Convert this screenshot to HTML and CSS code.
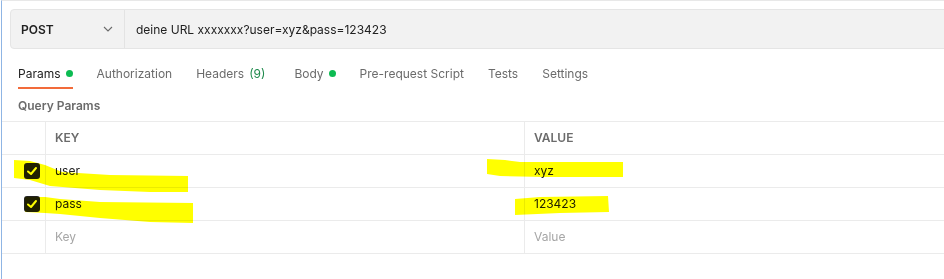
FILE: index.html
```html
<!DOCTYPE html>
<html lang="en">
<head>
<meta charset="UTF-8">
<title>Request - Params</title>
<link rel="stylesheet" href="styles.css">
</head>
<body>
<div class="frame">
    <div class="url-bar">
        <div class="method">
            <span class="method-name">POST</span>
            <svg class="chevron" width="10" height="6" viewBox="0 0 10 6"><polyline points="1,1 5,5 9,1" fill="none" stroke="#6b6b6b" stroke-width="1.1"/></svg>
        </div>
        <div class="url">deine URL xxxxxxx?user=xyz&amp;pass=123423</div>
    </div>

    <div class="tabs">
        <div class="tab active">Params <span class="dot"></span></div>
        <div class="tab">Authorization</div>
        <div class="tab">Headers <span class="count">(9)</span></div>
        <div class="tab">Body <span class="dot"></span></div>
        <div class="tab">Pre-request Script</div>
        <div class="tab">Tests</div>
        <div class="tab">Settings</div>
    </div>

    <div class="section-title">Query Params</div>

    <div class="params">
        <div class="row head">
            <div class="cell check"></div>
            <div class="cell key">KEY</div>
            <div class="cell value">VALUE</div>
        </div>
        <div class="row">
            <div class="cell check"><span class="box"><svg width="16" height="16" viewBox="0 0 16 16"><polyline points="4,8.5 7,11 12,5" fill="none" stroke="#fff" stroke-width="2" stroke-linecap="round" stroke-linejoin="round"/></svg></span></div>
            <div class="cell key">user</div>
            <div class="cell value">xyz</div>
        </div>
        <div class="row">
            <div class="cell check"><span class="box"><svg width="16" height="16" viewBox="0 0 16 16"><polyline points="4,8.5 7,11 12,5" fill="none" stroke="#fff" stroke-width="2" stroke-linecap="round" stroke-linejoin="round"/></svg></span></div>
            <div class="cell key">pass</div>
            <div class="cell value">123423</div>
        </div>
        <div class="row">
            <div class="cell check"></div>
            <div class="cell key placeholder">Key</div>
            <div class="cell value placeholder">Value</div>
        </div>
    </div>
</div>

<!-- marker strokes drawn over the screenshot -->
<svg class="marker" width="944" height="279" viewBox="0 0 944 279">
    <polygon points="14,160 30,161 45,165 62,172 110,175 188,176 188,192 150,192 100,190 50,186 30,180 14,178"/>
    <polygon points="25,197 45,197 60,199 100,202 193,203 193,223 150,222 100,218 60,214 45,213 25,212"/>
    <polygon points="487,159 505,160 520,162 623,162 623,177 545,177 500,176 487,174"/>
    <polygon points="515,199 540,197 608,196 609,212 560,213 515,215"/>
</svg>
</body>
</html>
```

FILE: styles.css
```css
body {
    margin: 0;
    padding: 0 0 0 1px;
    font-family: Inter, "Noto Sans", sans-serif;
    background-color: #fff;
    color: #212121;
    overflow: hidden;
}

.frame {
    height: 278px;
    border-top: 1px solid #e8e8e8;
    border-left: 1px solid #8fb5e4;
    overflow: hidden;
}

.url-bar {
    display: flex;
    height: 38px;
    margin: 8px -20px 0 8px;
    background-color: #f2f2f2;
    border: 1px solid #e5e5e5;
    border-radius: 4px;
}

.method {
    width: 114px;
    display: flex;
    align-items: center;
    justify-content: space-between;
    padding: 0 11px 0 10px;
    box-sizing: border-box;
    border-right: 1px solid #e3e3e3;
}

.method-name {
    font-size: 12px;
    font-weight: 600;
    color: #212121;
}

.url {
    display: flex;
    align-items: center;
    padding-left: 11px;
    font-size: 12px;
    color: #212121;
}

.tabs {
    display: flex;
    margin: 14px 0 0 16px;
}

.tab {
    display: flex;
    align-items: center;
    height: 20px;
    padding-bottom: 4px;
    margin-right: 24px;
    border-bottom: 2px solid transparent;
    font-size: 12px;
    color: #6b6b6b;
}

.tab.active {
    color: #212121;
    border-bottom-color: #f26b3a;
}

.dot {
    display: inline-block;
    width: 7px;
    height: 7px;
    margin-left: 5px;
    border-radius: 50%;
    background-color: #0cbb52;
}

.count {
    margin: 0 5px 0 5px;
    color: #1f8a4c;
}

.section-title {
    margin: 9px 0 7px 16px;
    line-height: 16px;
    font-size: 12px;
    font-weight: 600;
    color: #6b6b6b;
}

.params {
    margin-right: -20px;
}

.row {
    display: grid;
    grid-template-columns: 44px 479px 1fr;
    height: 32px;
    border-top: 1px solid #ebebeb;
}

.row:last-child {
    border-bottom: 1px solid #ebebeb;
}

.cell {
    display: flex;
    align-items: center;
    padding-bottom: 1px;
    box-sizing: border-box;
    font-size: 12px;
    color: #212121;
}

.cell.check {
    justify-content: flex-end;
    padding-right: 5px;
    border-right: 1px solid #ebebeb;
}

.cell.key {
    padding-left: 9px;
    border-right: 1px solid #ebebeb;
}

.cell.value {
    padding-left: 9px;
}

.row.head .cell {
    font-size: 12px;
    font-weight: 600;
    color: #6b6b6b;
}

.placeholder {
    color: #a6a6a6 !important;
}

.box {
    display: block;
    width: 16px;
    height: 16px;
    border-radius: 3px;
    background-color: #212121;
}

.box svg {
    display: block;
}

.marker {
    position: absolute;
    top: 0;
    left: 0;
    pointer-events: none;
    mix-blend-mode: multiply;
}

.marker polygon {
    fill: #ffff00;
}
```
